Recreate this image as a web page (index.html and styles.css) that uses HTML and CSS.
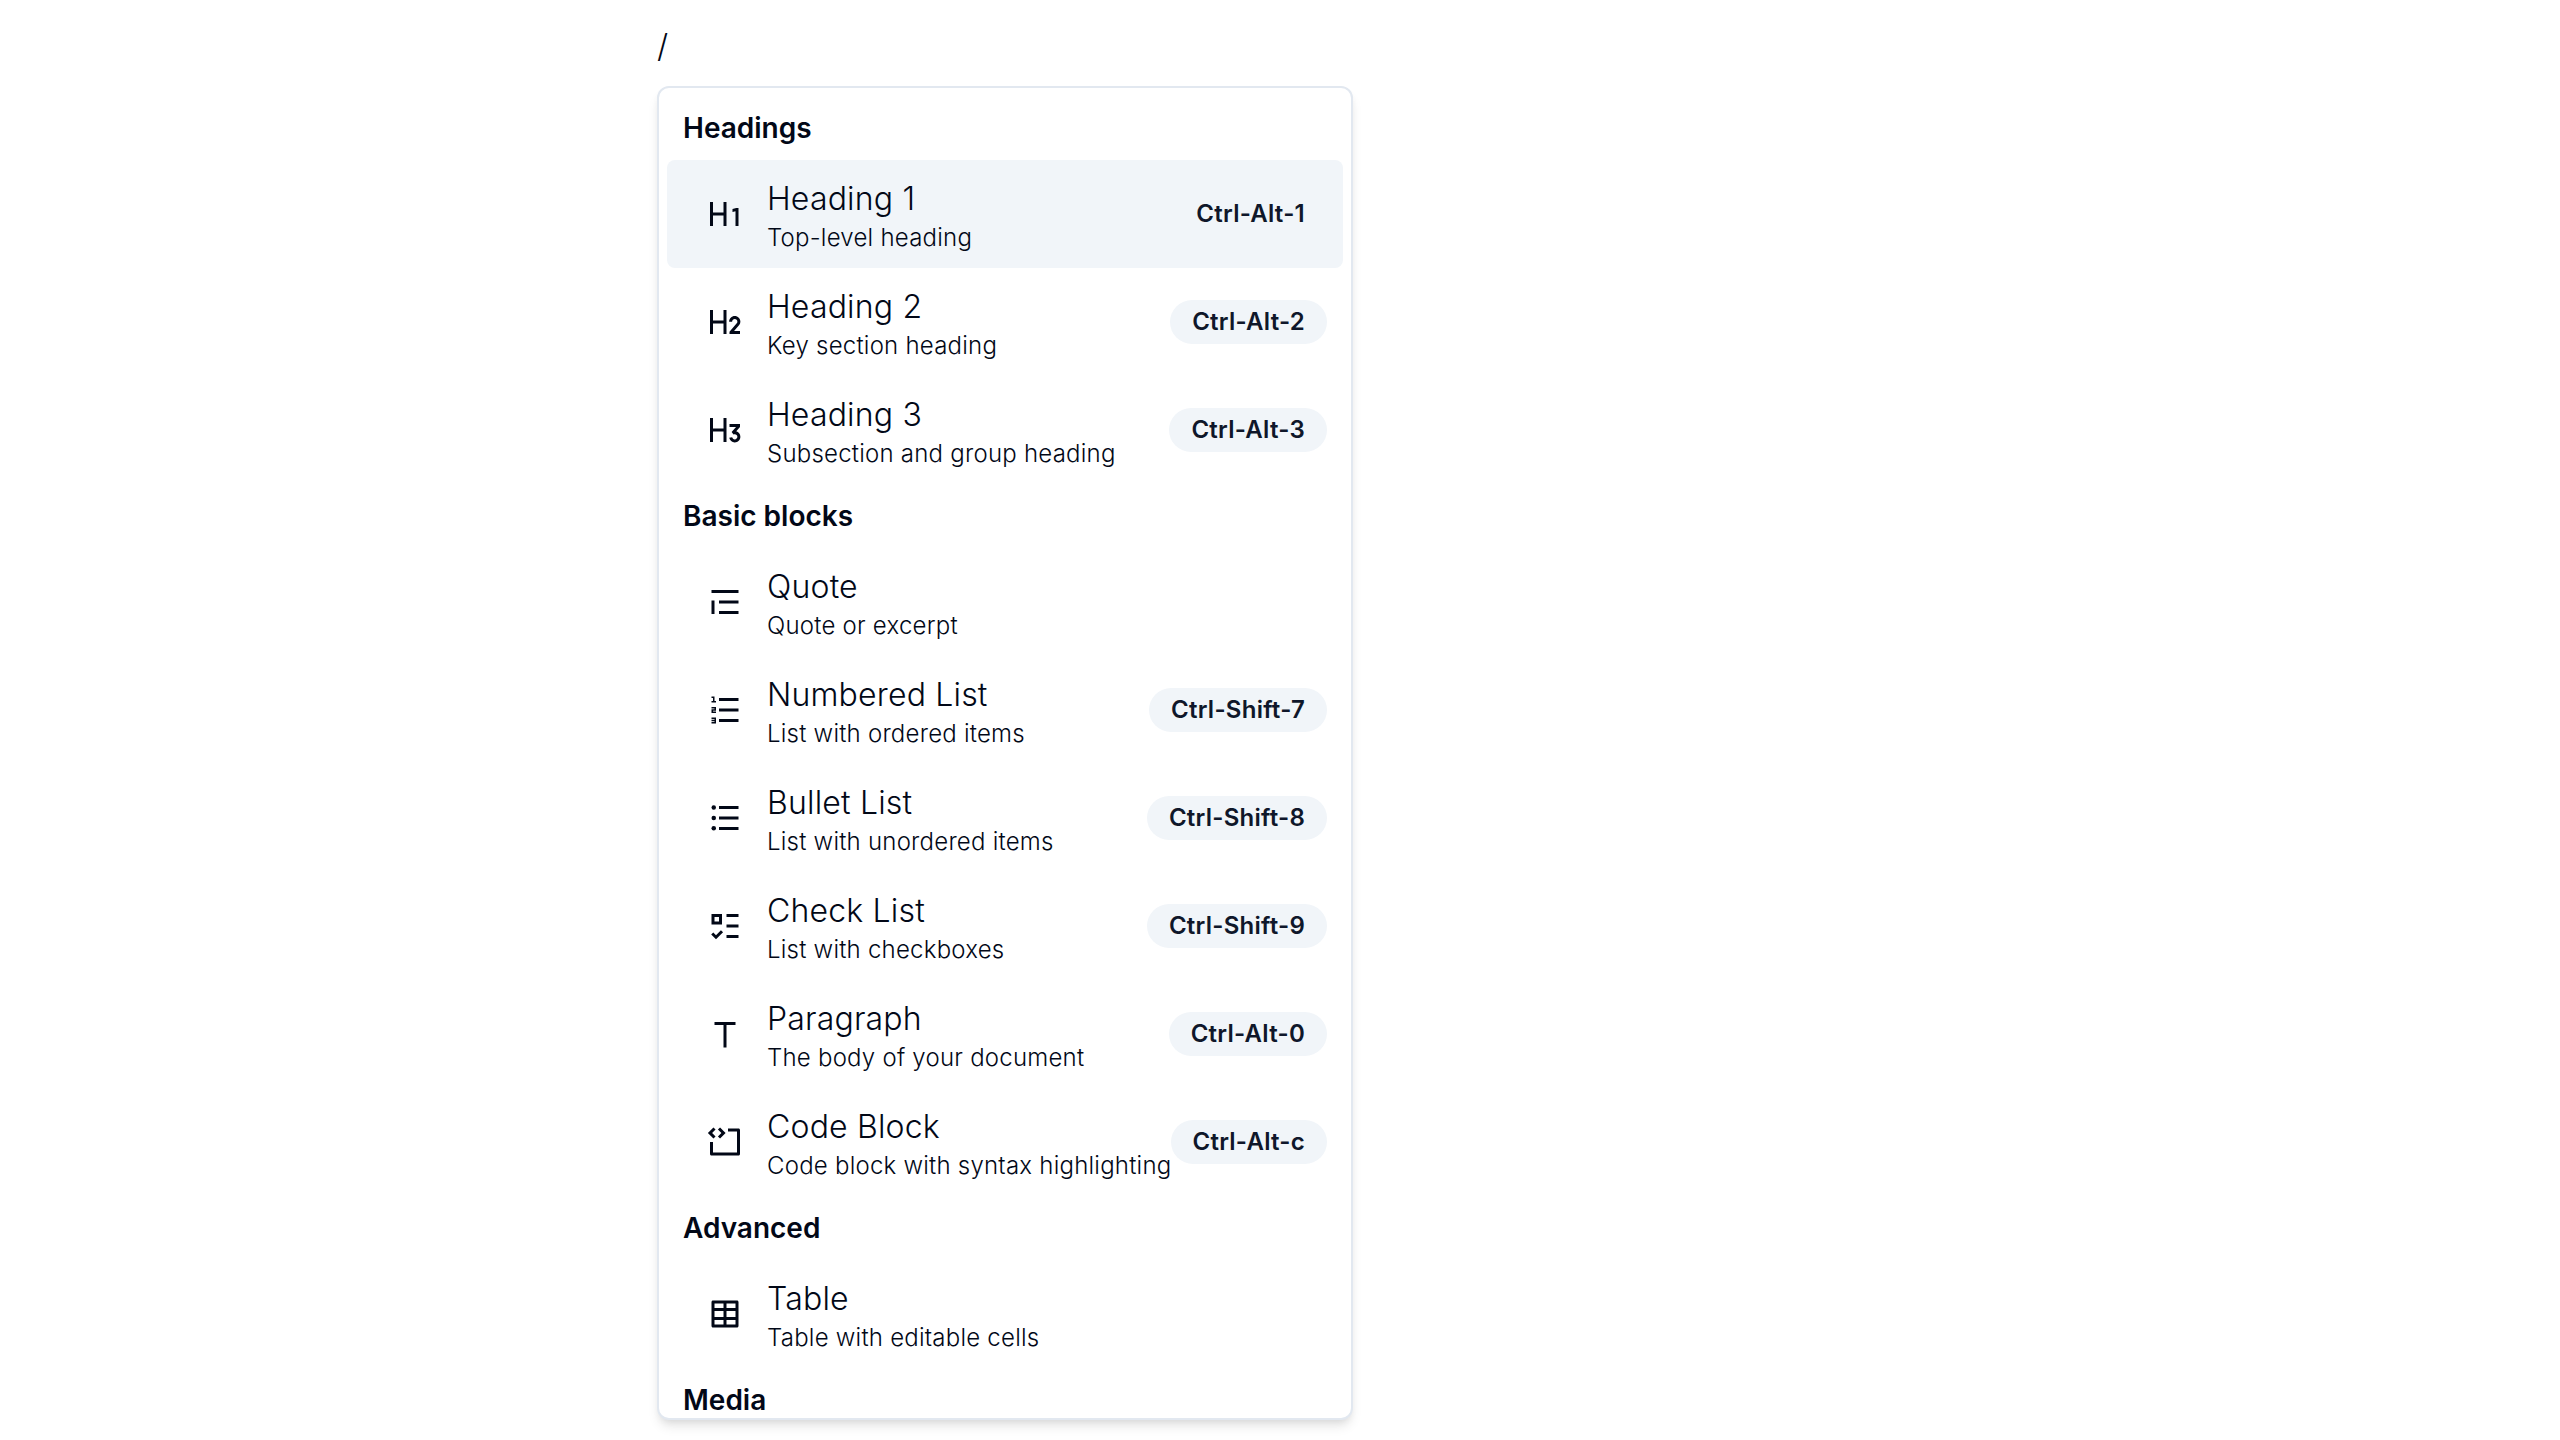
FILE: index.html
```html
<!DOCTYPE html>
<html lang="en">
<head>
<meta charset="utf-8">
<title>Editor</title>
<link rel="stylesheet" href="styles.css">
</head>
<body>
<main class="editor">
  <p class="block">/</p>
  <div class="menu" role="listbox">
    <div class="label">Headings</div>
    <div class="item selected" role="option">
      <svg class="icon" viewBox="0 0 24 24"><path d="M13 20H11V13H4V20H2V4H4V11H11V4H13V20ZM21.0005 8V20H19.0005L19 10.204L17 10.74V8.67L19.5005 8H21.0005Z"/></svg>
      <div class="body"><div class="title">Heading 1</div><div class="subtitle">Top-level heading</div></div>
      <div class="badge">Ctrl-Alt-1</div>
    </div>
    <div class="item" role="option">
      <svg class="icon" viewBox="0 0 24 24"><path d="M4 4V11H11V4H13V20H11V13H4V20H2V4H4ZM18.5 8C20.5711 8 22.25 9.67893 22.25 11.75C22.25 12.6074 21.9623 13.3976 21.4781 14.0292L21.3302 14.2102L18.0343 18H22V20H15L14.9993 18.444L19.8207 12.8981C20.0881 12.5908 20.25 12.1893 20.25 11.75C20.25 10.7835 19.4665 10 18.5 10C17.5818 10 16.8288 10.7071 16.7558 11.6065L16.75 11.75H14.75C14.75 9.67893 16.4289 8 18.5 8Z"/></svg>
      <div class="body"><div class="title">Heading 2</div><div class="subtitle">Key section heading</div></div>
      <div class="badge">Ctrl-Alt-2</div>
    </div>
    <div class="item" role="option">
      <svg class="icon" viewBox="0 0 24 24"><path d="M22 8L21.9984 10L19.4934 12.883C21.0823 13.3184 22.25 14.7728 22.25 16.5C22.25 18.5711 20.5711 20.25 18.5 20.25C16.674 20.25 15.1528 18.9449 14.8184 17.2166L16.7821 16.8352C16.9384 17.6413 17.6481 18.25 18.5 18.25C19.4665 18.25 20.25 17.4665 20.25 16.5C20.25 15.5335 19.4665 14.75 18.5 14.75C18.214 14.75 17.944 14.8186 17.7056 14.9403L16.3992 13.3932L19.3484 10H15V8H22ZM4 4V11H11V4H13V20H11V13H4V20H2V4H4Z"/></svg>
      <div class="body"><div class="title">Heading 3</div><div class="subtitle">Subsection and group heading</div></div>
      <div class="badge">Ctrl-Alt-3</div>
    </div>
    <div class="label">Basic blocks</div>
    <div class="item" role="option">
      <svg class="icon" viewBox="0 0 24 24"><path d="M21 4H3V6H21V4ZM21 11H8V13H21V11ZM21 18H8V20H21V18ZM5 11H3V20H5V11Z"/></svg>
      <div class="body"><div class="title">Quote</div><div class="subtitle">Quote or excerpt</div></div>
    </div>
    <div class="item" role="option">
      <svg class="icon" viewBox="0 0 24 24"><path d="M8 4H21V6H8V4ZM5 3V6H6V7H3V6H4V4H3V3H5ZM3 14V11.5H5V11H3V10H6V12.5H4V13H6V14H3ZM5 19.5H3V18.5H5V18H3V17H6V21H3V20H5V19.5ZM8 11H21V13H8V11ZM8 18H21V20H8V18Z"/></svg>
      <div class="body"><div class="title">Numbered List</div><div class="subtitle">List with ordered items</div></div>
      <div class="badge">Ctrl-Shift-7</div>
    </div>
    <div class="item" role="option">
      <svg class="icon" viewBox="0 0 24 24"><path d="M8 4H21V6H8V4ZM8 11H21V13H8V11ZM8 18H21V20H8V18Z"/><circle cx="4.5" cy="5" r="1.5"/><circle cx="4.5" cy="12" r="1.5"/><circle cx="4.5" cy="18.9" r="1.5"/></svg>
      <div class="body"><div class="title">Bullet List</div><div class="subtitle">List with unordered items</div></div>
      <div class="badge">Ctrl-Shift-8</div>
    </div>
    <div class="item" role="option">
      <svg class="icon" viewBox="0 0 24 24"><path d="M8 6v3H5V6h3zM3 4v7h7V4H3zm10 0h8v2h-8V4zm0 7h8v2h-8v-2zm0 7h8v2h-8v-2zm-2.293-1.793l-1.414-1.414L6 18.086l-1.793-1.793-1.414 1.414L6 20.914l4.707-4.707z"/></svg>
      <div class="body"><div class="title">Check List</div><div class="subtitle">List with checkboxes</div></div>
      <div class="badge">Ctrl-Shift-9</div>
    </div>
    <div class="item" role="option">
      <svg class="icon" viewBox="0 0 24 24"><path d="M13 6V21H11V6H5V4H19V6H13Z"/></svg>
      <div class="body"><div class="title">Paragraph</div><div class="subtitle">The body of your document</div></div>
      <div class="badge">Ctrl-Alt-0</div>
    </div>
    <div class="item" role="option">
      <svg class="icon" viewBox="0 0 24 24"><path d="M3.414 6L5.707 3.707L4.293 2.293L0.586 6L4.293 9.707L5.707 8.293L3.414 6ZM9.586 6L7.293 3.707L8.707 2.293L12.414 6L8.707 9.707L7.293 8.293L9.586 6ZM14 3H21C21.552 3 22 3.448 22 4V20C22 20.552 21.552 21 21 21H3C2.448 21 2 20.552 2 20V12H4V19H20V5H14V3Z"/></svg>
      <div class="body"><div class="title">Code Block</div><div class="subtitle">Code block with syntax highlighting</div></div>
      <div class="badge">Ctrl-Alt-c</div>
    </div>
    <div class="label">Advanced</div>
    <div class="item" role="option">
      <svg class="icon" viewBox="0 0 24 24"><path d="M13 10V14H19V10H13ZM11 10H5V14H11V10ZM13 19H19V16H13V19ZM11 19V16H5V19H11ZM13 5V8H19V5H13ZM11 5H5V8H11V5ZM4 3H20C20.552 3 21 3.448 21 4V20C21 20.552 20.552 21 20 21H4C3.448 21 3 20.552 3 20V4C3 3.448 3.448 3 4 3Z"/></svg>
      <div class="body"><div class="title">Table</div><div class="subtitle">Table with editable cells</div></div>
    </div>
    <div class="label">Media</div>
  </div>
</main>
</body>
</html>
```
FILE: styles.css
```css
* { box-sizing: border-box; }

body {
  margin: 0;
  background: #fff;
  color: #020817;
  font-family: Inter, "Liberation Sans", sans-serif;
  height: 1440px;
  overflow: hidden;
}

.editor {
  width: 696px;
  margin-left: 657px;
  padding-top: 22px;
}

.block {
  margin: 0 0 16px;
  font-size: 32px;
  line-height: 48px;
  font-weight: 300;
}

.menu {
  height: 1334px;
  padding: 8px;
  overflow: hidden;
  background: #fff;
  border: 2px solid #e2e8f0;
  border-radius: 12px;
  box-shadow: 0 8px 12px -2px rgba(0, 0, 0, 0.1), 0 4px 8px -4px rgba(0, 0, 0, 0.1);
}

.label {
  padding: 12px 16px;
  font-size: 28px;
  line-height: 40px;
  font-weight: 600;
}

.item {
  display: flex;
  align-items: center;
  height: 108px;
  padding: 12px 16px;
  border-radius: 8px;
}

.selected { background: #f1f5f9; }

.icon {
  flex: none;
  width: 36px;
  height: 36px;
  margin: 0 24px;
  fill: currentColor;
}

.body {
  flex: 1;
  width: 0;
  padding-top: 7px;
  white-space: nowrap;
}

.title {
  font-size: 32px;
  line-height: 40px;
  font-weight: 300;
  letter-spacing: 0.18px;
}

.subtitle {
  font-size: 24px;
  line-height: 37px;
  font-weight: 300;
  letter-spacing: 0.23px;
}

.badge {
  flex: none;
  padding: 4px 20px;
  border: 2px solid transparent;
  border-radius: 22px;
  background: #f1f5f9;
  color: #0f172a;
  font-size: 24px;
  line-height: 32px;
  font-weight: 600;
  letter-spacing: 0.25px;
}
```
